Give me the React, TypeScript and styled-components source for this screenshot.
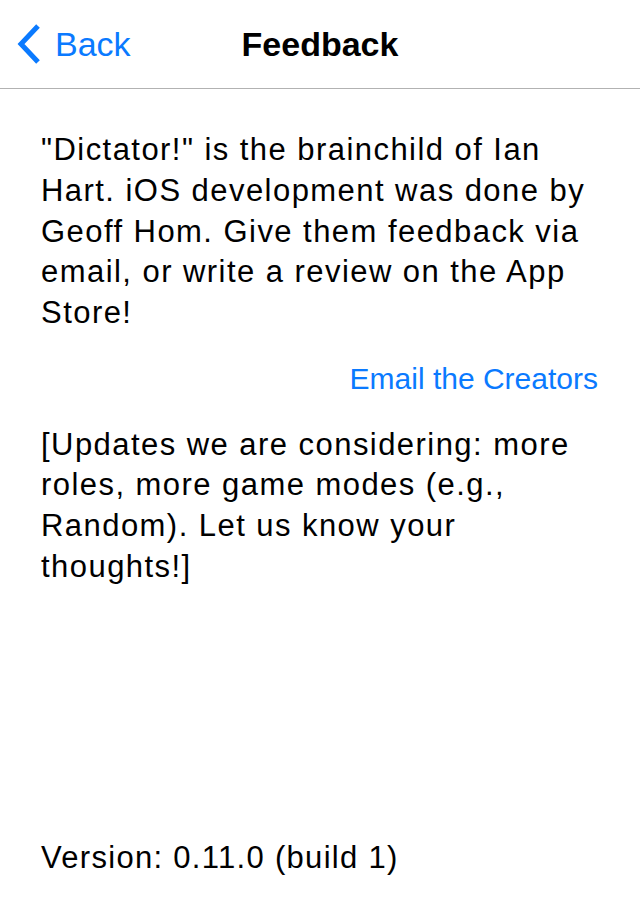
import React from "react";
import styled, { createGlobalStyle } from "styled-components";

const Global = createGlobalStyle`
  html, body { margin: 0; padding: 0; background: #ffffff; }
  body { font-family: "Liberation Sans", Arial, sans-serif; -webkit-font-smoothing: antialiased; }
`;

const Screen = styled.div`
  width: 640px;
  min-height: 920px;
  display: flex;
  flex-direction: column;
  background: #ffffff;
  color: #000000;
`;

const NavBar = styled.header`
  height: 88px;
  border-bottom: 1px solid #b2b2b2;
  display: grid;
  grid-template-columns: 1fr auto 1fr;
  align-items: center;
  box-sizing: content-box;
`;

const BackButton = styled.a`
  display: flex;
  align-items: center;
  gap: 14px;
  padding-left: 17px;
  color: #0a7aff;
  font-size: 34px;
  text-decoration: none;
  line-height: 1;
`;

const Title = styled.h1`
  margin: 0;
  font-size: 34px;
  font-weight: 700;
  line-height: 1;
`;

const Content = styled.main`
  flex: 1;
  display: flex;
  flex-direction: column;
  padding: 41px 20px 41px 41px;
`;

const Paragraph = styled.p`
  margin: 0;
  font-size: 31px;
  line-height: 40.75px;
  letter-spacing: 1.45px;
`;

const LinkRow = styled.div`
  display: flex;
  justify-content: flex-end;
  margin: 25px 22px 25px 0;
`;

const EmailLink = styled.a`
  color: #0a7aff;
  font-size: 30px;
  line-height: 40.75px;
  text-decoration: none;
`;

const Version = styled.p`
  margin: auto 0 0;
  font-size: 31px;
  line-height: 40.75px;
  letter-spacing: 1.3px;
`;

const Chevron = () => (
  <svg width="24" height="42" viewBox="0 0 24 42" fill="none">
    <path d="M21 3 L4 21 L21 39" stroke="#0a7aff" strokeWidth="5" strokeLinecap="butt" strokeLinejoin="miter" />
  </svg>
);

export default function App() {
  return (
    <>
      <Global />
      <Screen>
        <NavBar>
          <BackButton href="#">
            <Chevron />
            <span>Back</span>
          </BackButton>
          <Title>Feedback</Title>
          <div />
        </NavBar>
        <Content>
          <Paragraph>
            "Dictator!" is the brainchild of Ian<br />
            Hart. iOS development was done by<br />
            Geoff Hom. Give them feedback via<br />
            email, or write a review on the App<br />
            Store!
          </Paragraph>
          <LinkRow>
            <EmailLink href="#">Email the Creators</EmailLink>
          </LinkRow>
          <Paragraph>
            [Updates we are considering: more<br />
            roles, more game modes (e.g.,<br />
            Random). Let us know your<br />
            thoughts!]
          </Paragraph>
          <Version>Version: 0.11.0 (build 1)</Version>
        </Content>
      </Screen>
    </>
  );
}
